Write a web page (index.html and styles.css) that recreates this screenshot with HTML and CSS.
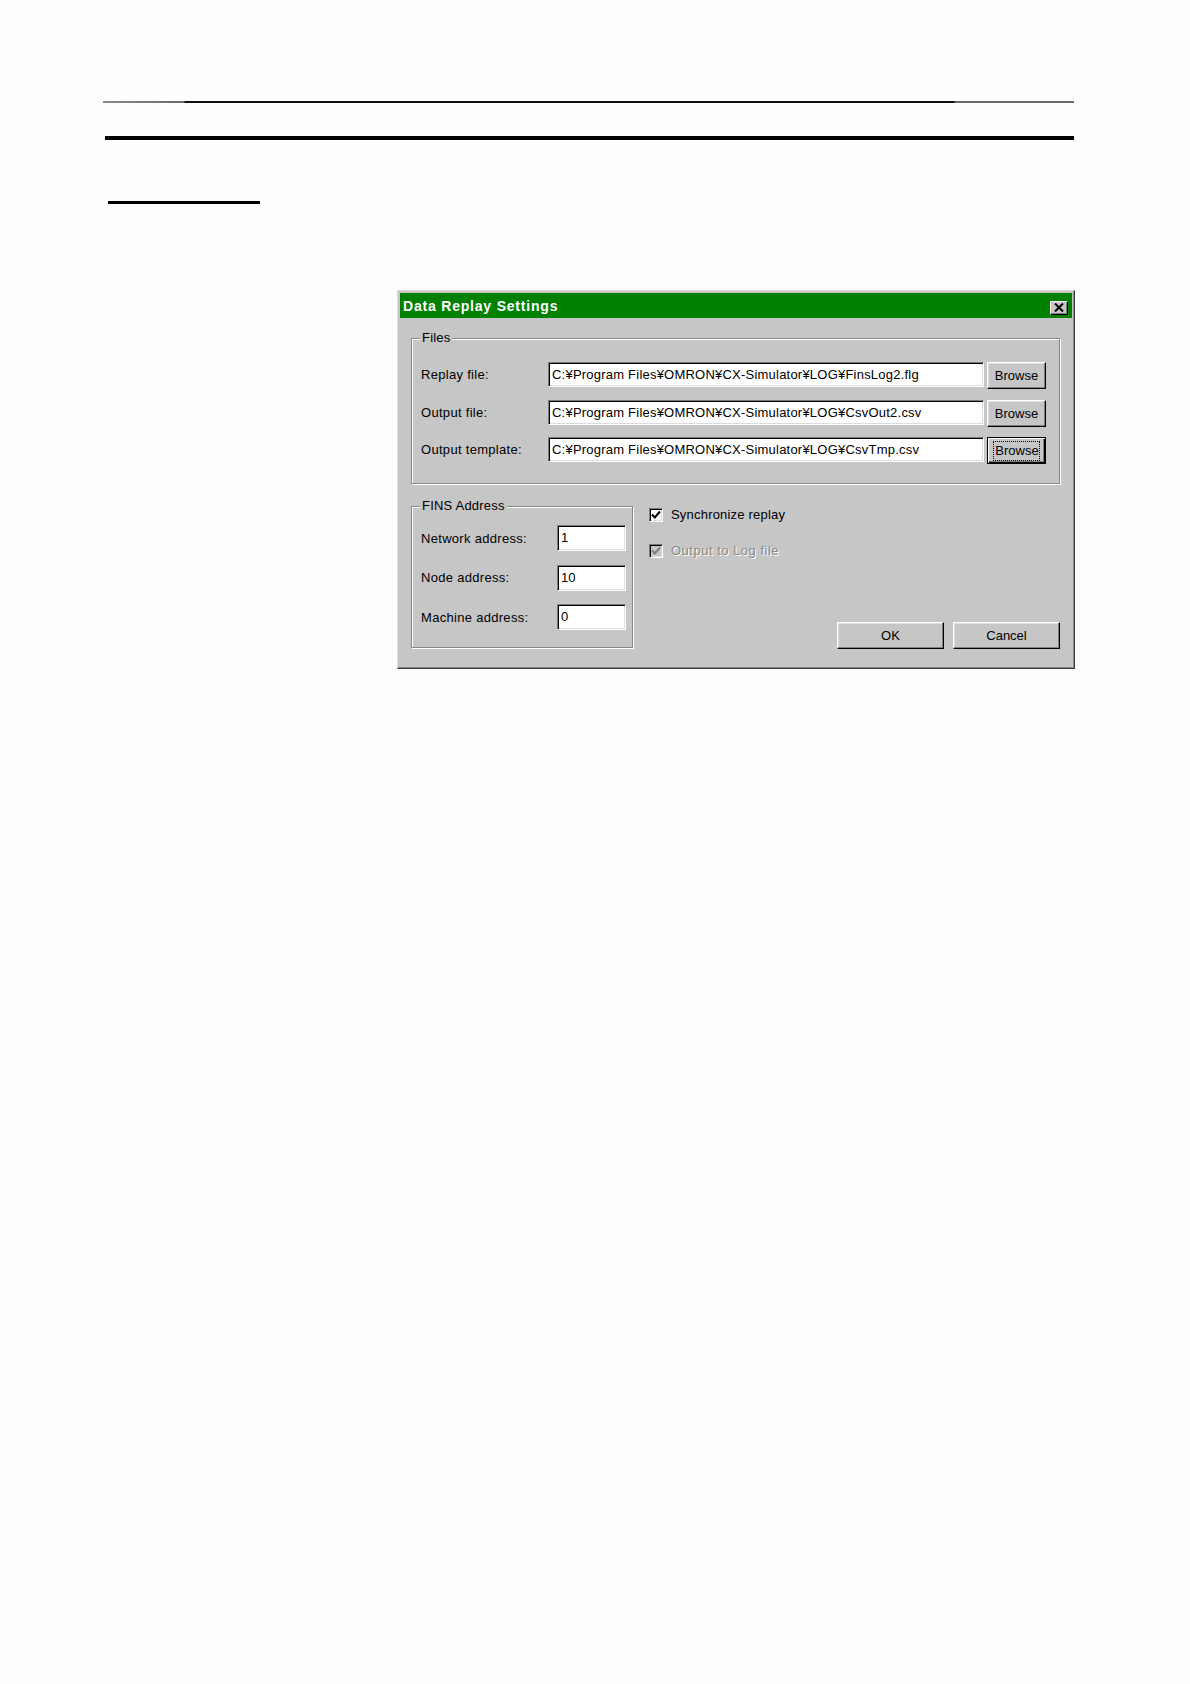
FILE: index.html
```html
<!DOCTYPE html>
<html lang="en">
<head>
<meta charset="utf-8">
<title>Data Replay Settings</title>
<link rel="stylesheet" href="styles.css">
</head>
<body>
<div class="page">
  <div class="rule-thin"></div>
  <div class="rule-thick"></div>
  <div class="rule-short"></div>

  <div class="dialog">
    <div class="titlebar">
      <span class="title">Data Replay Settings</span>
      <span class="close-btn">
        <svg width="10" height="9" viewBox="0 0 10 9"><path d="M1 0.5 L9 8.5 M9 0.5 L1 8.5" stroke="#000" stroke-width="2" fill="none"/></svg>
      </span>
    </div>
    <div class="dialog-body">
      <div class="group files">
        <span class="legend">Files</span>
        <div class="file-row">
          <span class="label">Replay file:</span>
          <span class="textbox wide">C:¥Program Files¥OMRON¥CX-Simulator¥LOG¥FinsLog2.flg</span>
          <span class="button browse">Browse</span>
        </div>
        <div class="file-row">
          <span class="label">Output file:</span>
          <span class="textbox wide">C:¥Program Files¥OMRON¥CX-Simulator¥LOG¥CsvOut2.csv</span>
          <span class="button browse">Browse</span>
        </div>
        <div class="file-row">
          <span class="label">Output template:</span>
          <span class="textbox wide">C:¥Program Files¥OMRON¥CX-Simulator¥LOG¥CsvTmp.csv</span>
          <span class="button browse focused"><span class="focus-rect">Browse</span></span>
        </div>
      </div>

      <div class="lower">
        <div class="group fins">
          <span class="legend">FINS Address</span>
          <div class="addr-row">
            <span class="label addr-label">Network address:</span>
            <span class="textbox small">1</span>
          </div>
          <div class="addr-row">
            <span class="label addr-label">Node address:</span>
            <span class="textbox small">10</span>
          </div>
          <div class="addr-row">
            <span class="label addr-label">Machine address:</span>
            <span class="textbox small">0</span>
          </div>
        </div>

        <div class="right-col">
          <div class="check-row">
            <span class="checkbox">
              <svg width="10" height="10" viewBox="0 0 10 10"><path d="M1 4.5 L3.8 7.5 L9 1.5" stroke="#000" stroke-width="2" fill="none"/></svg>
            </span>
            <span class="check-label">Synchronize replay</span>
          </div>
          <div class="check-row disabled">
            <span class="checkbox">
              <svg width="10" height="10" viewBox="0 0 10 10"><path d="M1 4.5 L3.8 7.5 L9 1.5" stroke="#808080" stroke-width="2" fill="none"/></svg>
            </span>
            <span class="check-label">Output to Log file</span>
          </div>
          <div class="actions">
            <span class="button action">OK</span>
            <span class="button action">Cancel</span>
          </div>
        </div>
      </div>
    </div>
  </div>
</div>
</body>
</html>
```
FILE: styles.css
```css
* { box-sizing: border-box; }

body {
  margin: 0;
  background: #fefefe;
  font-family: "Liberation Sans", Arial, sans-serif;
  color: #000;
}

.page {
  padding-top: 101px;
  width: 1190px;
  height: 1684px;
}

.rule-thin {
  margin-left: 103px;
  width: 971px;
  height: 2px;
  background: linear-gradient(to right, #8a8a8a 0, #6a6a6a 8.3%, #111 8.5%, #111 87.6%, #6a6a6a 87.8%, #6a6a6a 100%);
}

.rule-thick {
  margin: 33px 0 0 105px;
  width: 969px;
  height: 4px;
  background: #000;
}

.rule-short {
  margin: 61px 0 0 108px;
  width: 152px;
  height: 3px;
  background: #000;
}

/* Dialog */
.dialog {
  margin: 86px 0 0 397px;
  width: 678px;
  height: 379px;
  background: #c6c6c6;
  border: 1px solid;
  border-color: #dcdcdc #3a3a3a #3a3a3a #dcdcdc;
  box-shadow: inset -1px -1px 0 #8a8a8a;
  padding: 2px;
}

.titlebar {
  height: 25px;
  background: #008000;
  display: flex;
  align-items: center;
  justify-content: space-between;
  padding: 0 4px 0 3px;
}

.title {
  color: #fff;
  font-weight: bold;
  font-size: 14px;
  letter-spacing: 0.8px;
  margin-top: 1px;
}

.close-btn {
  width: 18px;
  height: 14px;
  margin-top: 5px;
  background: #c6c6c6;
  border: 1px solid;
  border-color: #fff #000 #000 #fff;
  box-shadow: inset -1px -1px 0 #808080;
  display: flex;
  align-items: center;
  justify-content: center;
}

.close-btn svg { display: block; margin-top: -1px; }

.dialog-body {
  padding: 20px 12px 0 11px;
}

/* Group boxes */
.group {
  position: relative;
  border: 1px solid #888;
  box-shadow: 1px 1px 0 #fff, inset 1px 1px 0 #fff;
}

.legend {
  position: absolute;
  top: -9px;
  left: 8px;
  padding: 0 2px 0 2px;
  background: #c6c6c6;
  font-size: 13px;
  line-height: 16px;
  letter-spacing: 0.2px;
}

.files {
  height: 146px;
  padding: 23px 13px 0 9px;
  display: flex;
  flex-direction: column;
  gap: 10.5px;
}

.file-row {
  display: flex;
  align-items: flex-start;
  height: 27px;
}

.label {
  font-size: 13px;
  line-height: 25px;
  letter-spacing: 0.3px;
}

.file-row .label { width: 127px; }

.textbox {
  display: block;
  background: #fff;
  border: 1px solid;
  border-color: #7a7a7a #fff #fff #7a7a7a;
  box-shadow: inset 1px 1px 0 #000, inset -1px -1px 0 #dcdcdc;
  font-size: 13px;
  line-height: 23px;
  padding: 0 3px;
  white-space: nowrap;
  overflow: hidden;
}

.textbox.wide {
  width: 436px;
  height: 25px;
  letter-spacing: 0.22px;
}

.button {
  display: flex;
  align-items: center;
  justify-content: center;
  background: #c6c6c6;
  border: 1px solid;
  border-color: #fff #000 #000 #fff;
  box-shadow: inset -1px -1px 0 #808080, inset 1px 1px 0 #dfdfdf;
  font-size: 13px;
}

.browse {
  width: 59px;
  height: 27px;
  margin-left: 3px;
}

.browse.focused {
  border: 1px solid #000;
  box-shadow: inset 1px 1px 0 #fff, inset -1px -1px 0 #000, inset -2px -2px 0 #808080;
}

.focus-rect {
  border: 1px dotted #000;
  padding: 1px 0 1px 1px;
  line-height: 16px;
}

/* Lower section */
.lower {
  display: flex;
  margin-top: 22px;
}

.fins {
  width: 222px;
  height: 142px;
  padding: 18px 0 0 9px;
  display: flex;
  flex-direction: column;
  gap: 13.5px;
}

.addr-row {
  display: flex;
  align-items: center;
  height: 26px;
}

.addr-label { width: 136px; }

.textbox.small {
  width: 69px;
  height: 26px;
  line-height: 24px;
  padding: 0 3px;
}

.right-col {
  flex: 1;
  margin-left: 16px;
  display: flex;
  flex-direction: column;
}

.check-row {
  display: flex;
  align-items: center;
  height: 15px;
  margin-top: 1px;
}

.check-row + .check-row { margin-top: 21px; }

.checkbox {
  width: 14px;
  height: 14px;
  background: #fff;
  border: 1px solid;
  border-color: #7a7a7a #fff #fff #7a7a7a;
  box-shadow: inset 1px 1px 0 #000, inset -1px -1px 0 #dcdcdc;
  display: flex;
  align-items: center;
  justify-content: center;
}

.checkbox svg { display: block; }

.check-label {
  margin-left: 8px;
  font-size: 13px;
  letter-spacing: 0.2px;
}

.disabled .checkbox { background: #c6c6c6; }

.disabled .check-label {
  color: #8a8a8a;
  text-shadow: 1px 1px 0 #fff;
  letter-spacing: 0.5px;
}

.actions {
  margin-top: auto;
  margin-bottom: -1px;
  display: flex;
  justify-content: flex-end;
  gap: 9px;
}

.action {
  width: 107px;
  height: 27px;
}
```
